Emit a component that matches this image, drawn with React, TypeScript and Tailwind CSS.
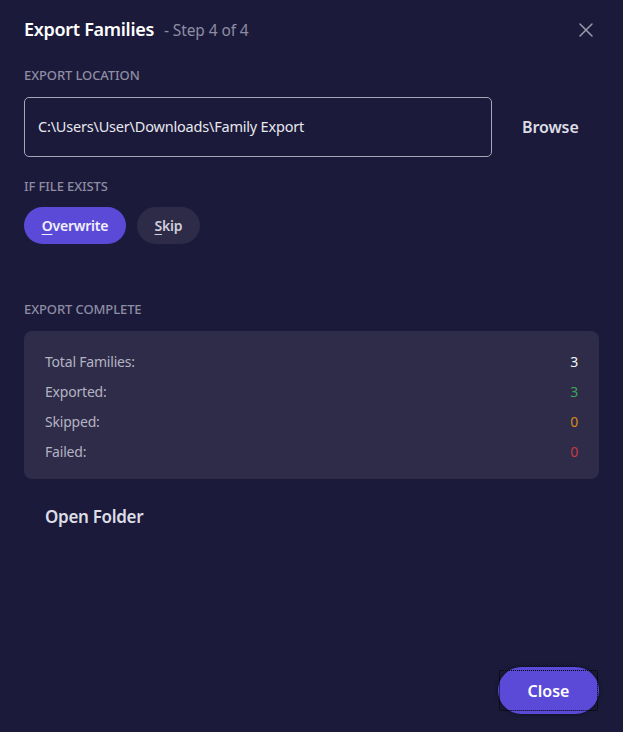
import { X } from 'lucide-react'

const stats = [
  { label: 'Total Families:', value: 3, color: 'text-gray-100' },
  { label: 'Exported:', value: 3, color: 'text-[#3fa356]' },
  { label: 'Skipped:', value: 0, color: 'text-[#d88a1a]' },
  { label: 'Failed:', value: 0, color: 'text-[#c9393f]' },
]

export default function App() {
  return (
    <div
      className="w-[623px] h-[732px] bg-[#1b1a3a] text-white flex flex-col px-6 pb-[18px]"
      style={{ fontFamily: '"Noto Sans", "Open Sans", sans-serif' }}
    >
      <div className="flex items-center justify-between pt-[15px] h-[44px]">
        <div className="flex items-baseline gap-[10px]">
          <h1 className="text-[18px] font-semibold tracking-[-0.3px]">Export Families</h1>
          <span className="text-[15.5px] text-[#8e8da3] tracking-[-0.1px]">- Step 4 of 4</span>
        </div>
        <button className="text-[#9a9aaa] mr-[1px]">
          <X size={24} strokeWidth={1.5} />
        </button>
      </div>

      <div className="mt-[22px] text-[13px] font-medium text-[#8e8da3] tracking-[-0.1px]">EXPORT LOCATION</div>
      <div className="mt-[11px] flex items-center gap-[30px]">
        <div className="w-[468px] h-[60px] border-[1.5px] border-[#a6a5b5] rounded-[5px] flex items-center px-[13px] text-[14.5px] text-[#e8e8ee] tracking-[-0.2px]">
          C:\Users\User\Downloads\Family Export
        </div>
        <button className="text-[16px] font-semibold text-[#dddde5] tracking-[-0.1px]">Browse</button>
      </div>

      <div className="mt-[20px] text-[13px] font-medium text-[#8e8da3] tracking-[-0.1px]">IF FILE EXISTS</div>
      <div className="mt-[11px] flex gap-[11px]">
        <button className="h-[37px] w-[102px] rounded-full bg-[#5b4ad8] text-[14px] font-semibold text-[#f1f0fb] tracking-[-0.2px]">
          <span className="underline underline-offset-[3px] decoration-1">O</span>verwrite
        </button>
        <button className="h-[37px] w-[63px] rounded-full bg-[#2d2b47] text-[14px] font-semibold text-[#cfcedb] tracking-[-0.2px]">
          <span className="underline underline-offset-[3px] decoration-1">S</span>kip
        </button>
      </div>

      <div className="mt-[56px] text-[13px] font-medium text-[#8e8da3] tracking-[-0.1px]">EXPORT COMPLETE</div>
      <div className="mt-[11px] bg-[#2e2c48] rounded-[8px] px-[21px] pt-[16px] pb-[12px] flex flex-col">
        {stats.map((s) => (
          <div key={s.label} className="h-[30px] flex items-center justify-between text-[14px] tracking-[-0.2px]">
            <span className="text-[#b4b3c3]">{s.label}</span>
            <span className={s.color}>{s.value}</span>
          </div>
        ))}
      </div>

      <button className="mt-[25px] ml-[21px] self-start text-[17px] font-semibold text-[#dddde5] tracking-[-0.3px]">
        Open Folder
      </button>

      <div className="mt-auto flex justify-end">
        <button className="h-[47px] w-[101px] rounded-full bg-[#5b4ad8] text-[16px] font-semibold text-white shadow-[0_0_4px_rgba(0,0,0,0.5)] relative">
          <span className="absolute inset-x-[1px] inset-y-[3px] border border-dotted border-black rounded-[2px]"></span>
          Close
        </button>
      </div>
    </div>
  )
}
